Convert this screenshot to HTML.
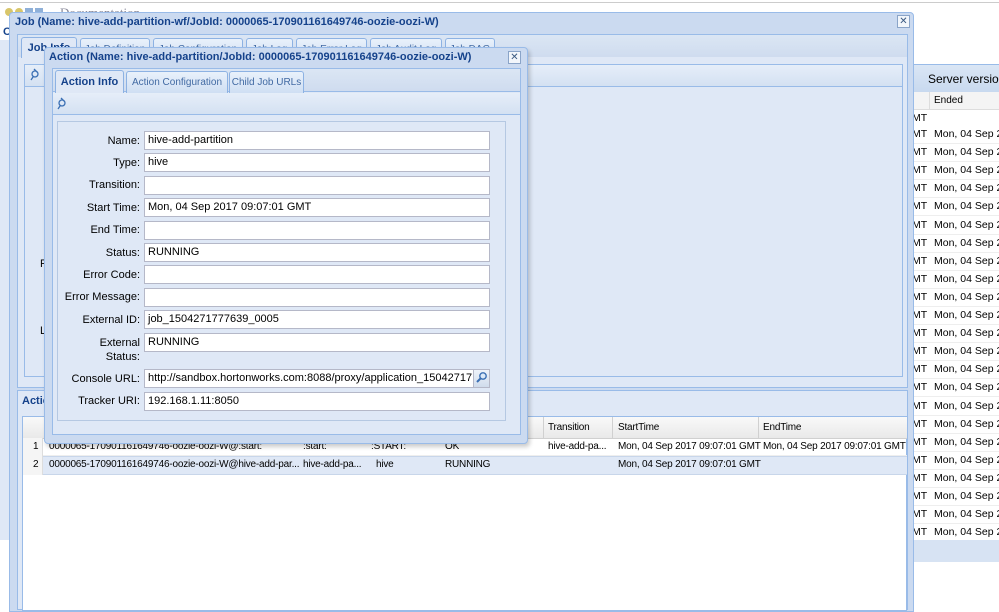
<!DOCTYPE html>
<html><head><meta charset="utf-8"><style>
*{box-sizing:border-box;margin:0;padding:0}
body{width:999px;height:607px;overflow:hidden;background:#fff;position:relative;font-family:"Liberation Sans",Tahoma,sans-serif;font-size:11px;color:#000}
.a{position:absolute;white-space:nowrap}
.t{font-family:"Liberation Sans",Tahoma,sans-serif;font-weight:bold;color:#15428b;font-size:11px;white-space:nowrap}
.cls{position:absolute;width:13px;height:13px;border:1px solid #8aa4c8;background:#f2f6fb;color:#3b5a82;font-size:10px;line-height:11px;text-align:center}
.lbl{position:absolute;right:0;width:95px;text-align:right;font-size:11px;color:#000;white-space:nowrap}
.inp{position:absolute;left:144px;width:346px;height:19px;background:#fff;border:1px solid #b5b8c8;padding:0 3px;line-height:17px;font-size:11px;white-space:nowrap;overflow:hidden}
.row{position:absolute;height:18px;line-height:18px;white-space:nowrap;font-size:10px;letter-spacing:-0.2px}
.tab{position:absolute;height:22px;border:1px solid #8db2e3;border-bottom:none;background:linear-gradient(#e9f1fb,#cfdff3);color:#416aa3;font-size:10px;line-height:21px;text-align:center;border-radius:3px 3px 0 0;white-space:nowrap;overflow:hidden}
.br{font-size:10.5px}
</style></head><body>
<div class="a" style="left:0;top:2px;width:999px;height:1px;background:#ccc"></div>
<div class="a" style="left:5px;top:8px;width:8px;height:8px;background:#d8c66a;border-radius:4px"></div>
<div class="a" style="left:15px;top:8px;width:8px;height:8px;background:#d8c66a;border-radius:4px"></div>
<div class="a" style="left:25px;top:8px;width:8px;height:8px;background:#8fb0d8"></div>
<div class="a" style="left:35px;top:8px;width:8px;height:8px;background:#8fb0d8"></div>
<div class="a" style="left:60px;top:5px;font-family:'Liberation Serif',serif;font-size:13px;color:#889">Documentation</div>
<div class="a" style="left:3px;top:26px;font-weight:bold;color:#15428b">O</div>
<div class="a" style="left:0;top:40px;width:12px;height:500px;background:#dfe8f6;border-right:1px solid #99bbe8"></div>
<div class="a" style="left:910px;top:64px;width:89px;height:28px;background:linear-gradient(#dae6f5,#c8d9ef);border-top:1px solid #99bbe8"></div>
<div class="a" style="left:928px;top:72px;font-size:12px">Server version</div>
<div class="a" style="left:910px;top:92px;width:89px;height:18px;background:#f4f4f4;border-bottom:1px solid #ddd"></div>
<div class="a" style="left:934px;top:95px;font-size:10px">Ended</div>
<div class="a" style="left:929px;top:92px;width:1px;height:18px;background:#ddd"></div>
<div class="a br" style="left:912px;top:112px">MT</div>
<div id="rr"></div>
<div class="a" style="left:910px;top:540px;width:89px;height:22px;background:#d7e3f3"></div>

<div class="a" style="left:9px;top:12px;width:905px;height:600px;background:#cbdaf0;border:1px solid #99bbe8;border-radius:4px 4px 0 0"></div>
<div class="a t" style="left:15px;top:16px">Job (Name: hive-add-partition-wf/JobId: 0000065-170901161649746-oozie-oozi-W)</div>
<div class="cls" style="left:897px;top:15px">✕</div>
<div class="a" style="left:17px;top:34px;width:891px;height:354px;background:#dfe8f6;border:1px solid #99bbe8"></div>
<div class="a" style="left:18px;top:35px;width:889px;height:22px;background:linear-gradient(#dbe6f4,#cfdcef)"></div>
<div class="tab" style="left:21px;top:37px;width:56px;background:#dfe8f6;color:#15428b;font-weight:bold;font-size:11px;height:21px">Job Info</div>
<div class="tab" style="left:80px;top:38px;width:70px">Job Definition</div>
<div class="tab" style="left:153px;top:38px;width:90px">Job Configuration</div>
<div class="tab" style="left:246px;top:38px;width:47px">Job Log</div>
<div class="tab" style="left:296px;top:38px;width:71px">Job Error Log</div>
<div class="tab" style="left:370px;top:38px;width:72px">Job Audit Log</div>
<div class="tab" style="left:445px;top:38px;width:50px">Job DAG</div>
<div class="a" style="left:24px;top:64px;width:879px;height:313px;background:#dfe8f6;border:1px solid #99bbe8"></div>
<div class="a" style="left:25px;top:65px;width:877px;height:22px;background:linear-gradient(#e6eef9,#d4e1f2);border-bottom:1px solid #99bbe8"></div>
<div class="a" style="left:40px;top:258px">P</div><div class="a" style="left:40px;top:325px">L</div>
<div class="a" style="left:17px;top:390px;width:891px;height:220px;background:#dfe8f6;border:1px solid #99bbe8"></div>
<div class="a t" style="left:22px;top:395px">Actions</div>
<div class="a" style="left:22px;top:416px;width:885px;height:195px;background:#fff;border:1px solid #99bbe8"></div>
<div class="a" style="left:23px;top:417px;width:884px;height:22px;background:linear-gradient(#f9f9f9,#e9e9e9);border-bottom:1px solid #d0d0d0"></div>
<div class="a" style="left:543px;top:417px;width:1px;height:22px;background:#d0d0d0"></div>
<div class="a" style="left:612px;top:417px;width:1px;height:22px;background:#d0d0d0"></div>
<div class="a" style="left:758px;top:417px;width:1px;height:22px;background:#d0d0d0"></div>
<div class="row" style="left:548px;top:419px">Transition</div>
<div class="row" style="left:618px;top:419px">StartTime</div>
<div class="row" style="left:763px;top:419px">EndTime</div>
<div class="a" style="left:23px;top:438px;width:884px;height:18px;border-bottom:1px solid #eee"></div>
<div class="a" style="left:23px;top:456px;width:884px;height:19px;background:#dfe8f6;border-top:1px solid #c8d6ea;border-bottom:1px solid #c8d6ea"></div>
<div class="a" style="left:23px;top:438px;width:20px;height:37px;background:#f5f5f5;border-right:1px solid #ddd"></div>
<div class="row" style="left:33px;top:438px">1</div>
<div class="row" style="left:33px;top:456px">2</div>
<div class="row" style="left:49px;top:438px">0000065-170901161649746-oozie-oozi-W@:start:</div>
<div class="row" style="left:49px;top:456px">0000065-170901161649746-oozie-oozi-W@hive-add-par...</div>
<div class="row" style="left:303px;top:438px">:start:</div><div class="row" style="left:303px;top:456px">hive-add-pa...</div>
<div class="row" style="left:371px;top:438px">:START:</div><div class="row" style="left:376px;top:456px">hive</div>
<div class="row" style="left:445px;top:438px">OK</div><div class="row" style="left:445px;top:456px">RUNNING</div>
<div class="row" style="left:548px;top:438px">hive-add-pa...</div>
<div class="row" style="left:618px;top:438px">Mon, 04 Sep 2017 09:07:01 GMT</div>
<div class="row" style="left:618px;top:456px">Mon, 04 Sep 2017 09:07:01 GMT</div>
<div class="row" style="left:763px;top:438px">Mon, 04 Sep 2017 09:07:01 GMT</div>

<div class="a" style="left:44px;top:47px;width:484px;height:397px;background:#cbdaf0;border:1px solid #99bbe8;border-radius:4px;box-shadow:2px 3px 4px rgba(0,0,0,.2)"></div>
<div class="a t" style="left:49px;top:51px">Action (Name: hive-add-partition/JobId: 0000065-170901161649746-oozie-oozi-W)</div>
<div class="cls" style="left:508px;top:51px">✕</div>
<div class="a" style="left:52px;top:68px;width:469px;height:367px;background:#dfe8f6;border:1px solid #99bbe8"></div>
<div class="a" style="left:53px;top:69px;width:467px;height:23px;background:linear-gradient(#dbe6f4,#cfdcef);border-bottom:1px solid #99bbe8"></div>
<div class="tab" style="left:55px;top:70px;width:69px;height:23px;background:#dfe8f6;color:#15428b;font-weight:bold;font-size:11px;line-height:22px">Action Info</div>
<div class="tab" style="left:126px;top:71px;width:102px">Action Configuration</div>
<div class="tab" style="left:229px;top:71px;width:75px">Child Job URLs</div>
<div class="a" style="left:53px;top:93px;width:467px;height:22px;background:linear-gradient(#e6eef9,#d4e1f2);border-bottom:1px solid #99bbe8"></div>
<svg class="a" style="left:56px;top:97px" width="12" height="14"><path d="M5 1l3 3M3 6a3 3 0 1 0 6 0a3 3 0 1 0-6 0M4 9l-2 3" stroke="#3a6fb4" stroke-width="1.3" fill="none"/></svg>
<svg class="a" style="left:29px;top:68px" width="12" height="14"><path d="M5 1l3 3M3 6a3 3 0 1 0 6 0a3 3 0 1 0-6 0M4 9l-2 3" stroke="#3a6fb4" stroke-width="1.3" fill="none"/></svg>
<div class="a" style="left:57px;top:121px;width:449px;height:300px;border:1px solid #b5c8e2;background:#dfe8f6"></div>
<div class="a" style="left:45px;top:0;width:95px;height:420px">
<div class="lbl" style="top:135px">Name:</div>
<div class="lbl" style="top:157px">Type:</div>
<div class="lbl" style="top:179px">Transition:</div>
<div class="lbl" style="top:202px">Start Time:</div>
<div class="lbl" style="top:224px">End Time:</div>
<div class="lbl" style="top:247px">Status:</div>
<div class="lbl" style="top:269px">Error Code:</div>
<div class="lbl" style="top:291px">Error Message:</div>
<div class="lbl" style="top:314px">External ID:</div>
<div class="lbl" style="top:336px;line-height:14px">External<br>Status:</div>
<div class="lbl" style="top:373px">Console URL:</div>
<div class="lbl" style="top:395px">Tracker URI:</div>
</div>
<div class="inp" style="top:131px">hive-add-partition</div>
<div class="inp" style="top:153px">hive</div>
<div class="inp" style="top:176px"></div>
<div class="inp" style="top:198px">Mon, 04 Sep 2017 09:07:01 GMT</div>
<div class="inp" style="top:221px"></div>
<div class="inp" style="top:243px">RUNNING</div>
<div class="inp" style="top:265px"></div>
<div class="inp" style="top:288px"></div>
<div class="inp" style="top:310px">job_1504271777639_0005</div>
<div class="inp" style="top:333px">RUNNING</div>
<div class="inp" style="top:369px;width:330px">http://sandbox.hortonworks.com:8088/proxy/application_15042717</div>
<div class="a" style="left:473px;top:369px;width:17px;height:19px;background:linear-gradient(#eef3fa,#d0dcec);border:1px solid #b5b8c8"></div>
<svg class="a" style="left:475px;top:371px" width="13" height="14"><circle cx="8" cy="5" r="3.2" stroke="#3a6fb4" stroke-width="1.4" fill="#dbe9f8"/><path d="M5.5 7.5L2 11" stroke="#3a6fb4" stroke-width="2"/></svg>
<div class="inp" style="top:392px">192.168.1.11:8050</div>
<script>
var h='';for(var i=0;i<23;i++){var y=128+i*18.1;h+='<div class="a br" style="left:912px;top:'+y+'px">MT</div><div class="a br" style="left:934px;top:'+y+'px">Mon, 04 Sep 20</div><div class="a" style="left:910px;top:'+(y+15)+'px;width:89px;height:1px;background:#eee"></div>';}
document.getElementById('rr').innerHTML=h;
</script>
</body></html>
